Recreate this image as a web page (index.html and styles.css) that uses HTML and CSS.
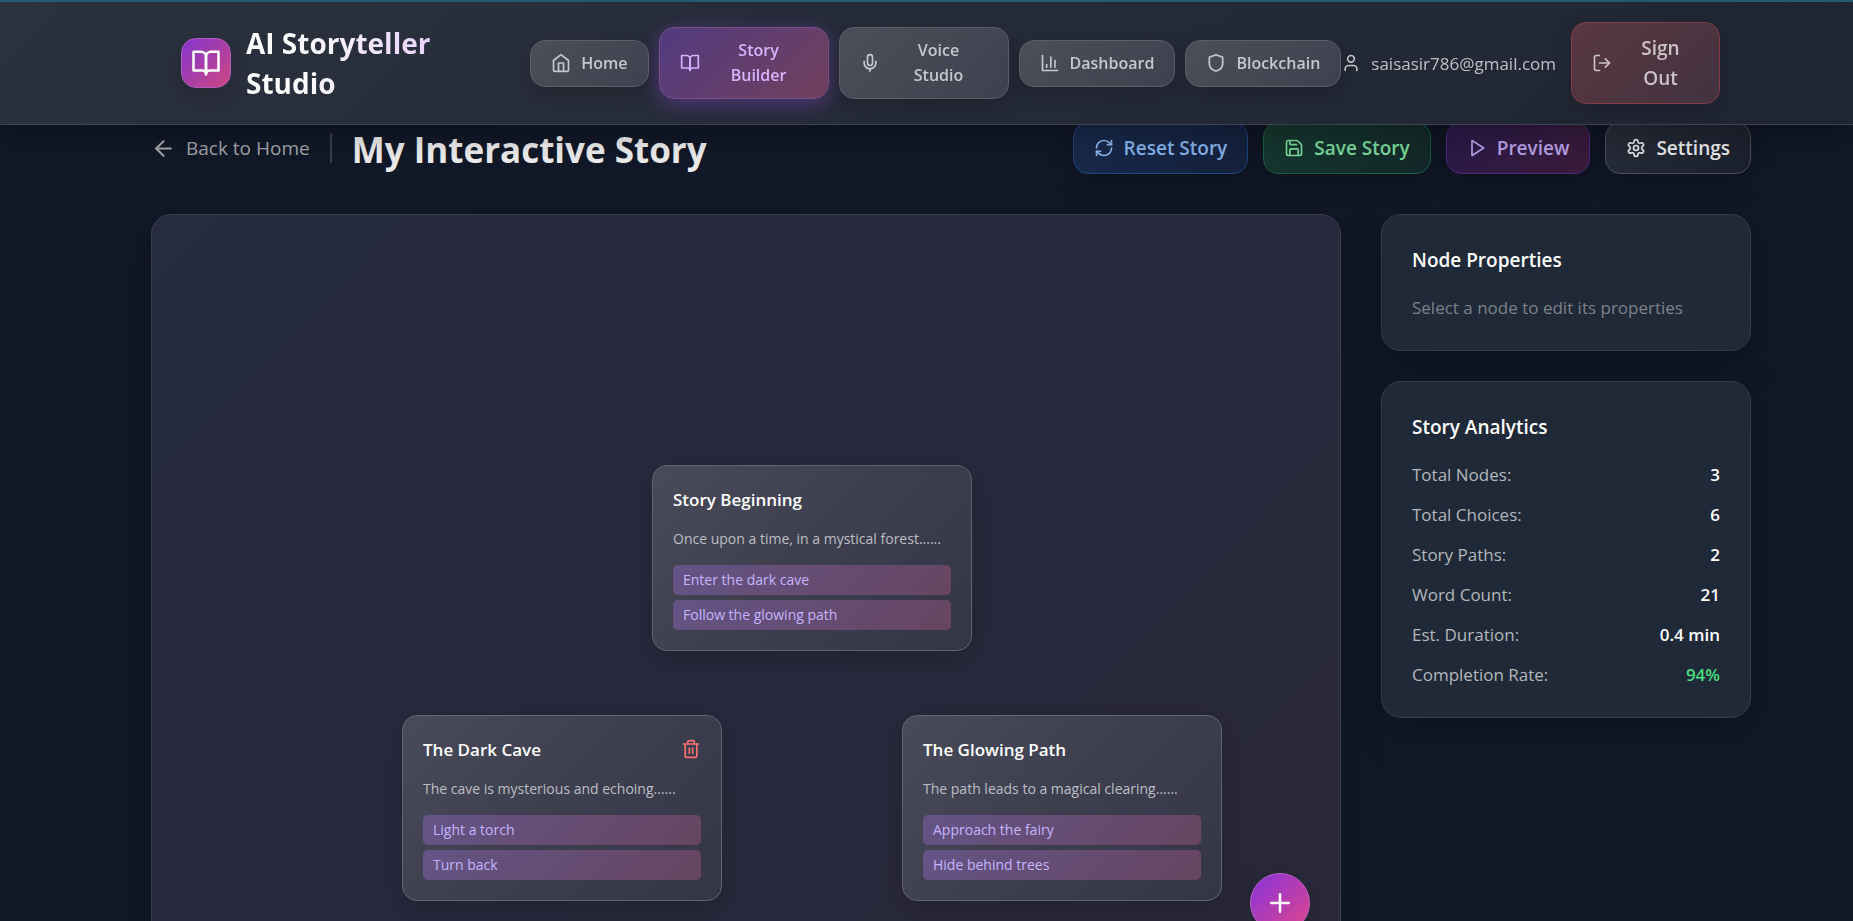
FILE: index.html
```html
<!DOCTYPE html>
<html lang="en">
<head>
    <meta charset="UTF-8">
    <meta name="viewport" content="width=device-width, initial-scale=1.0">
    <title>AI Storyteller Studio</title>
    <link rel="stylesheet" href="styles.css">
</head>
<body>

<header class="topbar">
    <div class="brand">
        <span class="brand-logo">
            <svg class="icon icon-lg" viewBox="0 0 24 24"><path d="M2 3h6a4 4 0 0 1 4 4v14a3 3 0 0 0-3-3H2z"/><path d="M22 3h-6a4 4 0 0 0-4 4v14a3 3 0 0 1 3-3h7z"/></svg>
        </span>
        <span class="brand-name">AI Storyteller Studio</span>
    </div>
    <nav class="nav">
        <button type="button" class="nav-btn">
            <svg class="icon" viewBox="0 0 24 24"><path d="m3 9 9-7 9 7v11a2 2 0 0 1-2 2H5a2 2 0 0 1-2-2z"/><path d="M9 22V12h6v10"/></svg>
            <span>Home</span>
        </button>
        <button type="button" class="nav-btn two-line active">
            <svg class="icon" viewBox="0 0 24 24"><path d="M2 3h6a4 4 0 0 1 4 4v14a3 3 0 0 0-3-3H2z"/><path d="M22 3h-6a4 4 0 0 0-4 4v14a3 3 0 0 1 3-3h7z"/></svg>
            <span>Story<br>Builder</span>
        </button>
        <button type="button" class="nav-btn two-line">
            <svg class="icon" viewBox="0 0 24 24"><path d="M12 2a3 3 0 0 0-3 3v7a3 3 0 0 0 6 0V5a3 3 0 0 0-3-3Z"/><path d="M19 10v2a7 7 0 0 1-14 0v-2"/><path d="M12 19v3"/></svg>
            <span>Voice<br>Studio</span>
        </button>
        <button type="button" class="nav-btn">
            <svg class="icon" viewBox="0 0 24 24"><path d="M3 3v18h18"/><path d="M13 17V5"/><path d="M18 17V9"/><path d="M8 17v-3"/></svg>
            <span>Dashboard</span>
        </button>
        <button type="button" class="nav-btn">
            <svg class="icon" viewBox="0 0 24 24"><path d="M20 13c0 5-3.500 7.500-8 9-4.500-1.500-8-4-8-9V5l8-3 8 3z"/></svg>
            <span>Blockchain</span>
        </button>
    </nav>
    <div class="account">
        <span class="user">
            <svg class="icon" viewBox="0 0 24 24"><path d="M19 21v-2a4 4 0 0 0-4-4H9a4 4 0 0 0-4 4v2"/><circle cx="12" cy="7" r="4"/></svg>
            <span>saisasir786@gmail.com</span>
        </span>
        <button type="button" class="sign-out">
            <svg class="icon" viewBox="0 0 24 24"><path d="M9 21H5a2 2 0 0 1-2-2V5a2 2 0 0 1 2-2h4"/><path d="m16 17 5-5-5-5"/><path d="M21 12H9"/></svg>
            <span>Sign<br>Out</span>
        </button>
    </div>
</header>

<main class="page">
    <div class="toolbar">
        <div class="heading">
            <a class="back" href="#">
                <svg class="icon icon-md" viewBox="0 0 24 24"><path d="m12 19-7-7 7-7"/><path d="M19 12H5"/></svg>
                <span>Back to Home</span>
            </a>
            <span class="divider"></span>
            <h1>My Interactive Story</h1>
        </div>
        <div class="actions">
            <button type="button" class="btn btn-reset">
                <svg class="icon" viewBox="0 0 24 24"><path d="M3 12a9 9 0 0 1 9-9 9.750 9.750 0 0 1 6.740 2.740L21 8"/><path d="M21 3v5h-5"/><path d="M21 12a9 9 0 0 1-9 9 9.750 9.750 0 0 1-6.740-2.740L3 16"/><path d="M8 16H3v5"/></svg>
                <span>Reset Story</span>
            </button>
            <button type="button" class="btn btn-save">
                <svg class="icon" viewBox="0 0 24 24"><path d="M15.200 3a2 2 0 0 1 1.400.6l3.800 3.800a2 2 0 0 1 .6 1.400V19a2 2 0 0 1-2 2H5a2 2 0 0 1-2-2V5a2 2 0 0 1 2-2z"/><path d="M17 21v-7a1 1 0 0 0-1-1H8a1 1 0 0 0-1 1v7"/><path d="M7 3v4a1 1 0 0 0 1 1h7"/></svg>
                <span>Save Story</span>
            </button>
            <button type="button" class="btn btn-preview">
                <svg class="icon" viewBox="0 0 24 24"><path d="m6 3 14 9-14 9z"/></svg>
                <span>Preview</span>
            </button>
            <button type="button" class="btn btn-settings">
                <svg class="icon" viewBox="0 0 24 24"><path d="M12.220 2h-.44a2 2 0 0 0-2 2v.18a2 2 0 0 1-1 1.730l-.43.25a2 2 0 0 1-2 0l-.15-.08a2 2 0 0 0-2.730.73l-.22.38a2 2 0 0 0 .73 2.730l.15.1a2 2 0 0 1 1 1.720v.51a2 2 0 0 1-1 1.740l-.15.09a2 2 0 0 0-.73 2.730l.22.38a2 2 0 0 0 2.730.73l.15-.08a2 2 0 0 1 2 0l.43.25a2 2 0 0 1 1 1.730V20a2 2 0 0 0 2 2h.44a2 2 0 0 0 2-2v-.18a2 2 0 0 1 1-1.730l.43-.25a2 2 0 0 1 2 0l.15.08a2 2 0 0 0 2.730-.73l.22-.39a2 2 0 0 0-.73-2.730l-.15-.08a2 2 0 0 1-1-1.740v-.5a2 2 0 0 1 1-1.740l.15-.09a2 2 0 0 0 .73-2.730l-.22-.38a2 2 0 0 0-2.730-.73l-.15.08a2 2 0 0 1-2 0l-.43-.25a2 2 0 0 1-1-1.730V4a2 2 0 0 0-2-2z"/><circle cx="12" cy="12" r="3"/></svg>
                <span>Settings</span>
            </button>
        </div>
    </div>

    <div class="workspace">
        <section class="canvas">
            <article class="node node-start">
                <div class="node-head"><h3>Story Beginning</h3></div>
                <p>Once upon a time, in a mystical forest......</p>
                <ul class="choices">
                    <li>Enter the dark cave</li>
                    <li>Follow the glowing path</li>
                </ul>
            </article>
            <article class="node node-cave">
                <div class="node-head">
                    <h3>The Dark Cave</h3>
                    <button type="button" class="delete" aria-label="Delete node">
                        <svg class="icon" viewBox="0 0 24 24"><path d="M3 6h18"/><path d="M19 6v14a2 2 0 0 1-2 2H7a2 2 0 0 1-2-2V6"/><path d="M8 6V4a2 2 0 0 1 2-2h4a2 2 0 0 1 2 2v2"/><path d="M10 11v6"/><path d="M14 11v6"/></svg>
                    </button>
                </div>
                <p>The cave is mysterious and echoing......</p>
                <ul class="choices">
                    <li>Light a torch</li>
                    <li>Turn back</li>
                </ul>
            </article>
            <article class="node node-path">
                <div class="node-head"><h3>The Glowing Path</h3></div>
                <p>The path leads to a magical clearing......</p>
                <ul class="choices">
                    <li>Approach the fairy</li>
                    <li>Hide behind trees</li>
                </ul>
            </article>
            <button type="button" class="add-node" aria-label="Add node">
                <svg class="icon icon-lg" viewBox="0 0 24 24"><path d="M5 12h14"/><path d="M12 5v14"/></svg>
            </button>
        </section>

        <aside class="sidebar">
            <section class="panel">
                <h2>Node Properties</h2>
                <p>Select a node to edit its properties</p>
            </section>
            <section class="panel">
                <h2>Story Analytics</h2>
                <dl class="stats">
                    <div><dt>Total Nodes:</dt><dd>3</dd></div>
                    <div><dt>Total Choices:</dt><dd>6</dd></div>
                    <div><dt>Story Paths:</dt><dd>2</dd></div>
                    <div><dt>Word Count:</dt><dd>21</dd></div>
                    <div><dt>Est. Duration:</dt><dd>0.4 min</dd></div>
                    <div><dt>Completion Rate:</dt><dd class="good">94%</dd></div>
                </dl>
            </section>
        </aside>
    </div>
</main>

</body>
</html>
```

FILE: styles.css
```css
* { box-sizing: border-box; margin: 0; padding: 0; }
body { font-family: "Open Sans", "Noto Sans", sans-serif; font-size: 17px; line-height: 25px; color: #fff; background: #111827; min-height: 100vh; }
button { font: inherit; color: inherit; cursor: pointer; }
a { color: inherit; text-decoration: none; }
ul { list-style: none; }

.icon { width: 20px; height: 20px; flex: none; fill: none; stroke: currentColor; stroke-width: 2; stroke-linecap: round; stroke-linejoin: round; }
.icon-md { width: 25px; height: 25px; }
.icon-lg { width: 30px; height: 30px; }

/* top bar, stays over the scrolled page */
.topbar { position: fixed; top: 0; left: 0; right: 0; z-index: 10; display: flex; align-items: center; height: 125px; padding: 0 133px 0 181px; border-top: 2px solid #265a70; border-bottom: 1px solid #3d434e; background: linear-gradient(135deg, #2b313d, #1f2532); box-shadow: 0 8px 32px rgba(0, 0, 0, 0.3); }
.brand { display: flex; align-items: center; gap: 15px; flex: 1; }
.brand-logo { display: flex; align-items: center; justify-content: center; flex: none; width: 50px; height: 50px; border: 1px solid #b55cc0; border-radius: 15px; background: linear-gradient(135deg, #8135d0, #cf4780); box-shadow: 0 8px 20px rgba(0, 0, 0, 0.15); }
.brand-name { width: 220px; font-size: 28px; font-weight: 700; line-height: 40px; color: transparent; background: linear-gradient(90deg, #fff, #fff 20%, #e3c8fd); -webkit-background-clip: text; background-clip: text; }

.nav { display: flex; align-items: center; gap: 10px; }
.nav-btn, .sign-out, .btn { display: flex; align-items: center; gap: 10px; padding: 10px 20px; border: 1px solid #5b5f69; border-radius: 15px; white-space: nowrap; font-weight: 600; }
.nav-btn { font-size: 16px; color: #c6c8cb; background: linear-gradient(135deg, #4b4f5a, #3e424e); box-shadow: 0 8px 20px rgba(0, 0, 0, 0.15); }
.nav-btn span, .sign-out span { flex: 1; text-align: center; }
.two-line { width: 170px; }
.nav-btn.active { color: #d8b4fe; border-color: #75518a; background: linear-gradient(135deg, #533b80, #71405c); box-shadow: 0 5px 20px rgba(147, 71, 220, 0.4); }

.account { display: flex; align-items: center; gap: 15px; }
.user { display: flex; align-items: center; gap: 10px; color: #bfc1c5; }
.sign-out { width: 149px; font-size: 19px; line-height: 30px; color: #cbc3c8; border-color: #843b45; background: linear-gradient(135deg, #593741, #42333f); box-shadow: 0 8px 20px rgba(0, 0, 0, 0.15); }

.page { padding: 122px 102px 30px 151px; }
.toolbar { display: flex; align-items: center; justify-content: space-between; margin-bottom: 40px; }
.heading { display: flex; align-items: center; gap: 20px; }
.back { display: flex; align-items: center; gap: 10px; font-size: 19px; color: #a3a5a9; }
.divider { width: 2px; height: 30px; background: #3a3f4a; }
h1 { padding-top: 4px; font-size: 35px; line-height: 48px; color: #ececec; }
.actions { display: flex; gap: 15px; }
.btn { font-size: 19px; line-height: 30px; box-shadow: 0 8px 24px rgba(0, 0, 0, 0.25); }
.btn-reset { color: #86b3ec; border-color: #234580; background: linear-gradient(135deg, #182a4d, #15213c); }
.btn-save { color: #79da9c; border-color: #195c42; background: linear-gradient(135deg, #15392f, #132829); }
.btn-preview { color: #b7a2e8; border-color: #4c2678; background: linear-gradient(135deg, #29194b, #3b1c39); }
.btn-settings { color: #ebebed; border-color: #4a4f59; background: linear-gradient(135deg, #272d39, #1b202d); }

.workspace { display: flex; align-items: flex-start; gap: 40px; }
.canvas { position: relative; flex: 1; height: 750px; border: 1px solid #393d4d; border-radius: 20px; background: linear-gradient(135deg, #262b3f, #28293d 50%, #2a293b); box-shadow: 0 10px 40px rgba(0, 0, 0, 0.25); }

/* story nodes on the free canvas */
.node { position: absolute; width: 320px; padding: 20px; border: 1px solid #62646f; border-radius: 15px; background: linear-gradient(135deg, #494b5a, #3e4050 45%, #343648); box-shadow: 0 8px 32px rgba(0, 0, 0, 0.2); }
.node-start { left: 500px; top: 250px; }
.node-cave { left: 250px; top: 500px; }
.node-path { left: 750px; top: 500px; }
.node-head { display: flex; align-items: center; justify-content: space-between; height: 26px; margin-bottom: 15px; }
.node h3 { font-size: 17px; font-weight: 600; }
.node p { margin-bottom: 15px; font-size: 14px; line-height: 23px; color: #bdbec3; }
.delete { display: flex; border: 0; color: #f87171; background: none; }
.choices { display: grid; gap: 5px; }
.choices li { padding: 5px 10px; border-radius: 5px; font-size: 14px; line-height: 20px; color: #c4b5fd; background: linear-gradient(135deg, #645486, #654e77 40%, #674560); }
.add-node { position: absolute; right: 30px; bottom: 30px; display: flex; align-items: center; justify-content: center; width: 60px; height: 60px; border: 1px solid #c062c4; border-radius: 50%; background: linear-gradient(135deg, #8633dd, #e0468a); box-shadow: 0 8px 32px rgba(0, 0, 0, 0.2); }

.sidebar { display: grid; gap: 30px; width: 370px; }
.panel { padding: 30px; border: 1px solid #333c4a; border-radius: 20px; background: #1f2937; box-shadow: 0 10px 40px rgba(0, 0, 0, 0.25); }
.panel h2 { margin-bottom: 20px; font-size: 19px; font-weight: 600; line-height: 30px; }
.panel p { color: #7d8289; }
.stats { display: grid; gap: 15px; }
.stats div { display: flex; justify-content: space-between; }
.stats dt { color: #b4b7bb; }
.stats dd { font-weight: 600; }
.stats .good { color: #4ade80; }
```
